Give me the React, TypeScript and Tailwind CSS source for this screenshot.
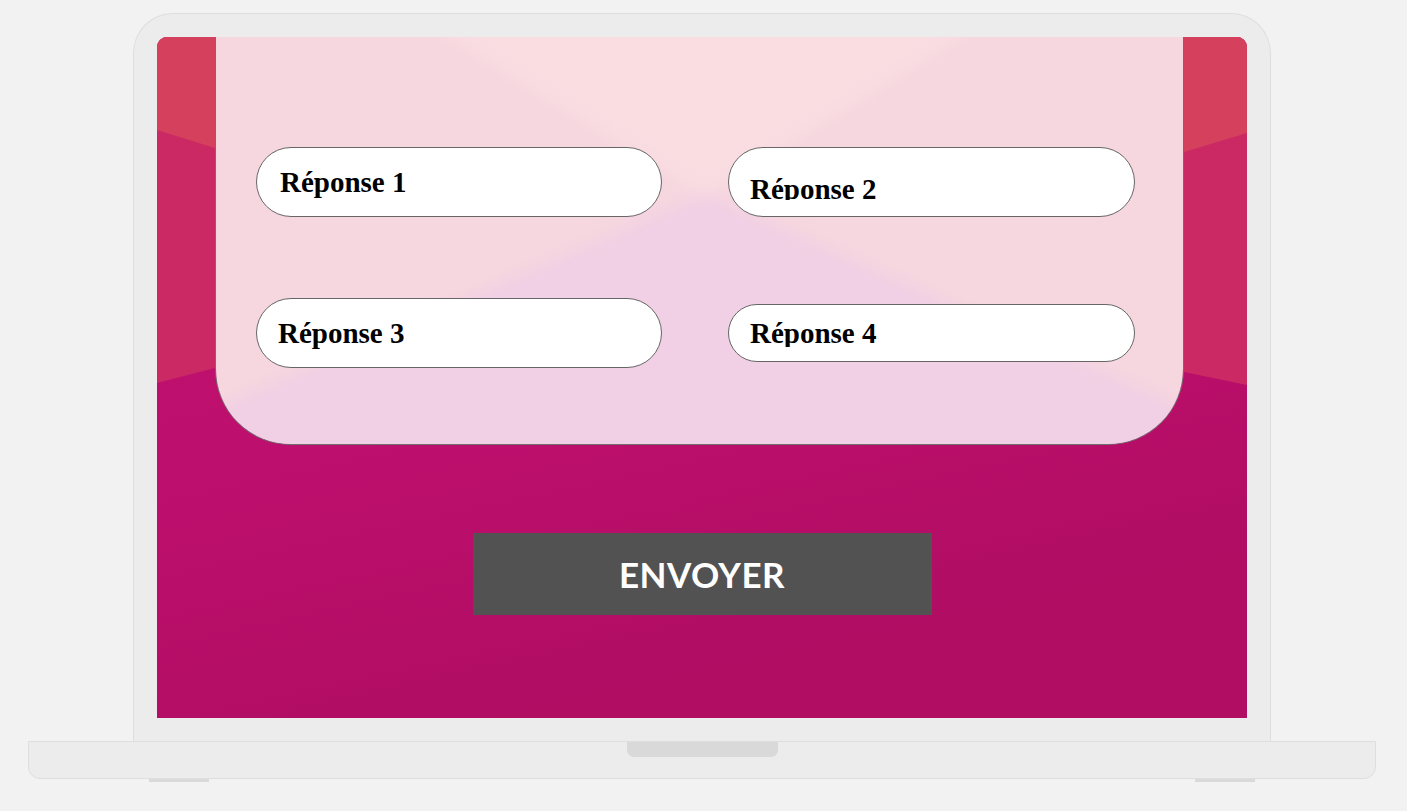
const serif = { fontFamily: '"Liberation Serif", "DejaVu Serif", serif' };

type Answer = {
  label: string;
  boxClass: string;
  lineClass: string;
};

const answers: Answer[] = [
  { label: 'Réponse 1', boxClass: 'h-[70px]', lineClass: 'pl-[23px] pt-[18px] h-[52px]' },
  { label: 'Réponse 2', boxClass: 'h-[70px]', lineClass: 'pl-[21px] pt-[25px] h-[52px]' },
  { label: 'Réponse 3', boxClass: 'h-[70px]', lineClass: 'pl-[21px] pt-[18px] h-[52px]' },
  { label: 'Réponse 4', boxClass: 'h-[58px] mt-[6px]', lineClass: 'pl-[21px] pt-[12px] h-[42px]' },
];

const AnswerField = ({ answer }: { answer: Answer }) => (
  <div className={`${answer.boxClass} rounded-full border border-[#666] bg-white overflow-hidden`}>
    <div className={`${answer.lineClass} overflow-hidden`}>
      <span
        className="block text-[29px] leading-[32px] font-bold text-black whitespace-nowrap"
        style={serif}
      >
        {answer.label}
      </span>
    </div>
  </div>
);

const ScreenBackground = () => (
  <svg className="absolute inset-0 w-full h-full" viewBox="0 0 1090 681" preserveAspectRatio="none">
    <defs>
      <linearGradient id="mag" x1="0" y1="0" x2="0.35" y2="1">
        <stop offset="0" stopColor="#c2116f" />
        <stop offset="0.6" stopColor="#bd0f6d" />
        <stop offset="1" stopColor="#b00d63" />
      </linearGradient>
    </defs>
    <rect width="1090" height="681" fill="url(#mag)" />
    <polygon points="0,0 1090,0 1090,348 1027,335 545,300 58,331 0,346" fill="#cb2964" />
    <polygon points="0,0 1090,0 1090,96 1027,115 545,130 58,111 0,93" fill="#d5415d" />
  </svg>
);

const CardBackground = () => (
  <svg className="absolute inset-0 w-full h-full" viewBox="0 0 969 408" preserveAspectRatio="none">
    <defs>
      <filter id="soft" x="-10%" y="-10%" width="120%" height="120%">
        <feGaussianBlur stdDeviation="8" />
      </filter>
    </defs>
    <rect width="969" height="408" fill="#f6d6df" />
    <g filter="url(#soft)">
      <polygon points="200,-20 490,160 780,-20" fill="#f9dde1" />
      <polygon points="-40,390 490,158 1010,390 1010,450 -40,450" fill="#f1cfe5" />
    </g>
  </svg>
);

export default function App() {
  return (
    <div className="min-h-[811px] w-full bg-[#f2f2f2] overflow-hidden">
      <div className="w-[1404px] flex flex-col items-center pt-[13px]">
        {/* lid */}
        <div className="w-[1138px] h-[729px] rounded-t-[40px] border border-b-0 border-[#dedede] bg-[#ececec] p-[23px] pb-0">
          <div className="relative w-[1090px] h-[681px] rounded-t-[10px] overflow-hidden">
            <ScreenBackground />
            <div className="relative flex flex-col">
              <div className="relative ml-[58px] w-[969px] h-[408px] border-x border-b border-[#6f6f6f] rounded-b-[76px] overflow-hidden">
                <CardBackground />
                <div className="relative grid grid-cols-[406px_407px] gap-x-[66px] gap-y-[81px] items-start pl-[40px] pt-[110px]">
                  {answers.map((a) => (
                    <AnswerField key={a.label} answer={a} />
                  ))}
                </div>
              </div>
              <div className="flex justify-center mt-[88px]">
                <button
                  className="w-[459px] h-[82px] bg-[#525252] text-white text-[35px] font-bold tracking-[0.5px]"
                  style={{ fontFamily: 'Lato, "Open Sans", sans-serif' }}
                >
                  ENVOYER
                </button>
              </div>
            </div>
          </div>
        </div>
        {/* base */}
        <div className="relative w-[1348px] h-[38px] -mt-[1px] rounded-b-[12px] border border-[#dedede] bg-[#ececec] flex justify-center">
          <div className="w-[151px] h-[15px] rounded-b-[7px] bg-[#d9d9d9]" />
        </div>
        <div className="w-[1348px] flex justify-between px-[121px]">
          <div className="w-[60px] h-[3px] bg-[#dadada]" />
          <div className="w-[60px] h-[3px] bg-[#dadada]" />
        </div>
      </div>
    </div>
  );
}
